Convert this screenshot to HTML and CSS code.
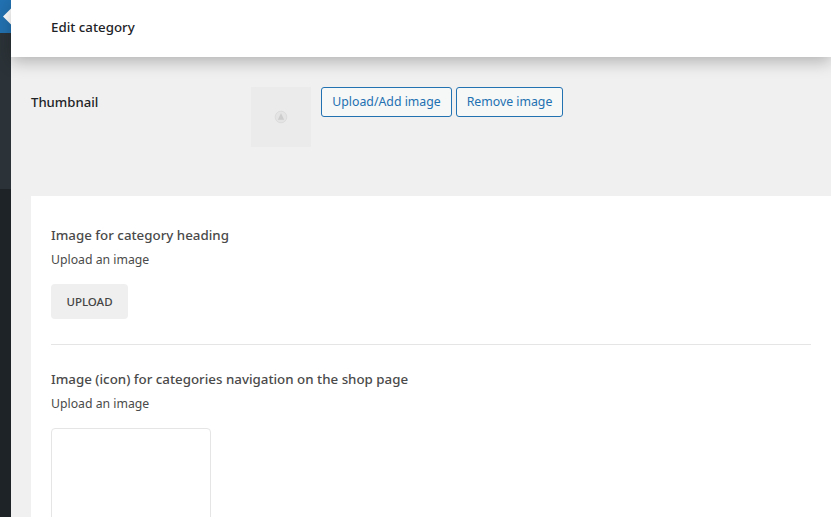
FILE: index.html
```html
<!DOCTYPE html>
<html lang="en">
<head>
<meta charset="utf-8">
<title>Edit category</title>
<link rel="stylesheet" href="styles.css">
</head>
<body>
<div class="app">
  <aside class="sidebar">
    <div class="side-active"><span class="side-arrow"></span></div>
    <div class="side-sub"></div>
    <div class="side-rest"></div>
  </aside>
  <main class="main">
    <header class="topbar"><h1 class="page-title">Edit category</h1></header>
    <section class="thumb-row">
      <div class="thumb-label">Thumbnail</div>
      <div class="thumb-preview">
        <svg class="thumb-icon" width="14" height="14" viewBox="0 0 14 14"><circle cx="7" cy="7" r="5.8" fill="#e4e4e4" stroke="#dcdcdc"/><path d="M7 3.2 10.2 9.8H3.8Z" fill="#cdcdcd"/></svg>
      </div>
      <div class="thumb-actions">
        <button class="wp-btn wp-btn-add">Upload/Add image</button>
        <button class="wp-btn wp-btn-remove">Remove image</button>
      </div>
    </section>
    <section class="card">
      <div class="field field-first">
        <h2 class="field-title">Image for category heading</h2>
        <p class="field-hint">Upload an image</p>
        <button class="upload-btn">UPLOAD</button>
      </div>
      <div class="field field-second">
        <h2 class="field-title">Image (icon) for categories navigation on the shop page</h2>
        <p class="field-hint">Upload an image</p>
        <div class="image-box"></div>
      </div>
    </section>
  </main>
</div>
</body>
</html>
```
FILE: styles.css
```css
* { box-sizing: border-box; }
html, body { margin: 0; height: 100%; overflow: hidden; }
body { font-family: "Noto Sans", "Open Sans", sans-serif; background: #f0f0f0; color: #3c434a; }
.app { display: flex; height: 517px; overflow: hidden; }
.sidebar { width: 11px; flex: none; display: flex; flex-direction: column; background: #1d2327; }
.side-active { height: 33px; background: #2271b1; display: flex; align-items: center; justify-content: flex-end; flex: none; }
.side-arrow { width: 0; height: 0; border: 8px solid transparent; border-left-width: 0; border-right: 8px solid #fff; transform: translateY(-0.5px); }
.side-sub { height: 156px; background: #2c3338; flex: none; }
.side-rest { flex: 1; }
.main { flex: 1; min-width: 0; background: #f0f0f0; }
.topbar { height: 57px; background: #fff; box-shadow: 0 5px 15px rgba(0,0,0,.25); padding: 18px 0 0 40px; position: relative; }
.page-title { margin: 0; font-size: 13.3px; line-height: 18px; font-weight: 500; color: #1d2327; }
.thumb-row { display: flex; align-items: flex-start; height: 139px; padding: 30px 0 0 20px; }
.thumb-label { width: 220px; font-size: 13.15px; line-height: 30px; font-weight: 500; color: #1d2327; }
.thumb-preview { width: 60px; height: 60px; background: #ebebeb; display: flex; align-items: center; justify-content: center; margin-right: 10px; }
.thumb-actions { display: flex; gap: 4px; }
.wp-btn { height: 30px; padding: 0; border: 1px solid #2271b1; border-radius: 3px; background: #f6f7f7; color: #2271b1; font: 400 12.3px/28px "Noto Sans", sans-serif; }
.wp-btn-add { width: 131px; }
.wp-btn-remove { width: 107px; }
.card { margin-left: 20px; background: #fff; padding: 0 20px; height: 400px; }
.field-first { padding-top: 30px; height: 149px; border-bottom: 1px solid #e5e5e5; }
.field-second { padding-top: 25px; }
.field-title { margin: 0; font-size: 13.33px; line-height: 18px; font-weight: 500; color: #4a4a4a; }
.field-hint { margin: 7px 0 0; font-size: 12.25px; line-height: 18px; color: #4a4a4a; }
.upload-btn { display: block; margin-top: 15px; width: 77px; height: 35px; border: 0; border-radius: 4px; background: #efefef; color: #444; font: 500 11.5px/35px "Noto Sans", sans-serif; padding: 0; }
.image-box { margin-top: 15px; width: 160px; height: 160px; border: 1px solid #e5e5e5; border-radius: 4px; background: #fff; }
```
